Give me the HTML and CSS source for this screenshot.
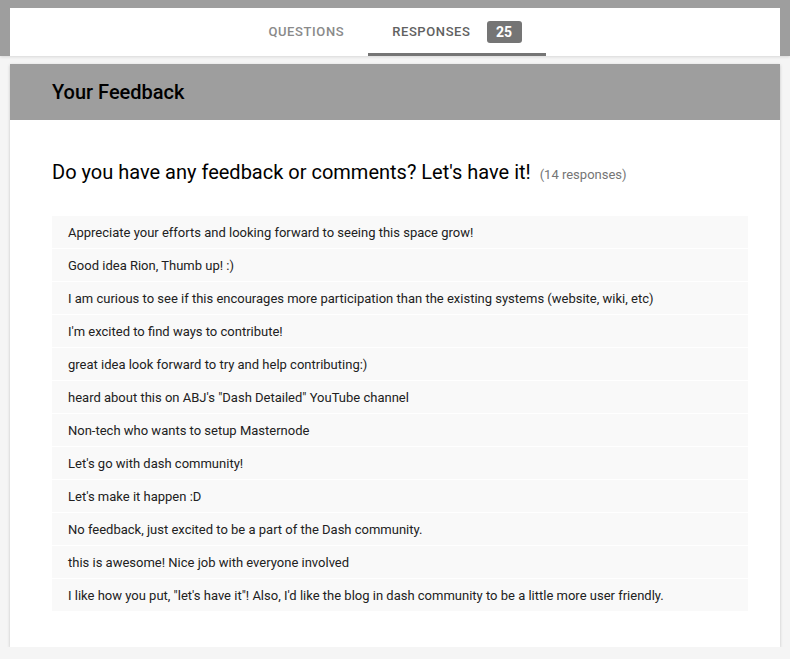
FILE: index.html
```html
<!DOCTYPE html>
<html>
<head>
<meta charset="utf-8">
<link rel="stylesheet" href="styles.css">
</head>
<body>
<div class="topbar">
  <nav class="tabs">
    <div class="tab">QUESTIONS</div>
    <div class="tab active">RESPONSES <span class="badge">25</span></div>
  </nav>
</div>
<section class="card">
  <header class="card-head"><h1>Your Feedback</h1></header>
  <div class="card-body">
    <h2 class="question">Do you have any feedback or comments? Let's have it! <span class="count">(14 responses)</span></h2>
    <ul class="answers">
      <li>Appreciate your efforts and looking forward to seeing this space grow!</li>
      <li>Good idea Rion, Thumb up! :)</li>
      <li>I am curious to see if this encourages more participation than the existing systems (website, wiki, etc)</li>
      <li>I'm excited to find ways to contribute!</li>
      <li>great idea look forward to try and help contributing:)</li>
      <li>heard about this on ABJ's "Dash Detailed" YouTube channel</li>
      <li>Non-tech who wants to setup Masternode</li>
      <li>Let's go with dash community!</li>
      <li>Let's make it happen :D</li>
      <li>No feedback, just excited to be a part of the Dash community.</li>
      <li>this is awesome! Nice job with everyone involved</li>
      <li>I like how you put, "let's have it"! Also, I'd like the blog in dash community to be a little more user friendly.</li>
    </ul>
  </div>
</section>
</body>
</html>
```
FILE: styles.css
```css
* { box-sizing: border-box; }
body {
  margin: 0;
  background: #f5f5f5;
  font-family: Roboto, "Liberation Sans", sans-serif;
  color: #212121;
}
.topbar {
  background: #9e9e9e;
  height: 56px;
  padding: 8px 10px 0;
  box-shadow: 0 1px 3px rgba(0,0,0,0.12);
  position: relative;
}
.tabs {
  background: #fff;
  height: 48px;
  display: flex;
  justify-content: center;
}
.tab {
  height: 48px;
  padding: 0 24px;
  display: flex;
  align-items: center;
  gap: 16px;
  font-size: 13px;
  font-weight: 500;
  letter-spacing: 0.6px;
  color: #8a8a8a;
  border-bottom: 3px solid transparent;
  padding-top: 2px;
}
.tab.active {
  color: #616161;
  border-bottom-color: #757575;
}
.badge {
  display: inline-flex;
  align-items: center;
  justify-content: center;
  width: 35px;
  height: 22px;
  border-radius: 3px;
  background: #757575;
  color: #fff;
  font-size: 14px;
  font-weight: 700;
  letter-spacing: 0;
}
.card {
  margin: 8px 10px 0;
  background: #fff;
  box-shadow: 0 1px 3px rgba(0,0,0,0.2);
}
.card-head {
  background: #9e9e9e;
  height: 56px;
  padding-left: 42px;
  display: flex;
  align-items: center;
}
.card-head h1 {
  margin: 0;
  font-size: 20px;
  font-weight: 500;
  color: #000;
}
.card-body {
  padding: 40px 32px 35px 42px;
}
.question {
  margin: 0 0 29px;
  font-size: 20px;
  font-weight: 400;
  line-height: 24px;
  color: #000;
}
.count {
  font-size: 13px;
  color: #757575;
  margin-left: 4px;
}
.answers {
  list-style: none;
  margin: 0;
  padding: 0;
}
.answers li {
  background: #f9f9f9;
  height: 32px;
  margin-bottom: 1px;
  padding: 0 16px;
  display: flex;
  align-items: center;
  font-size: 13px;
  color: #212121;
}
```
